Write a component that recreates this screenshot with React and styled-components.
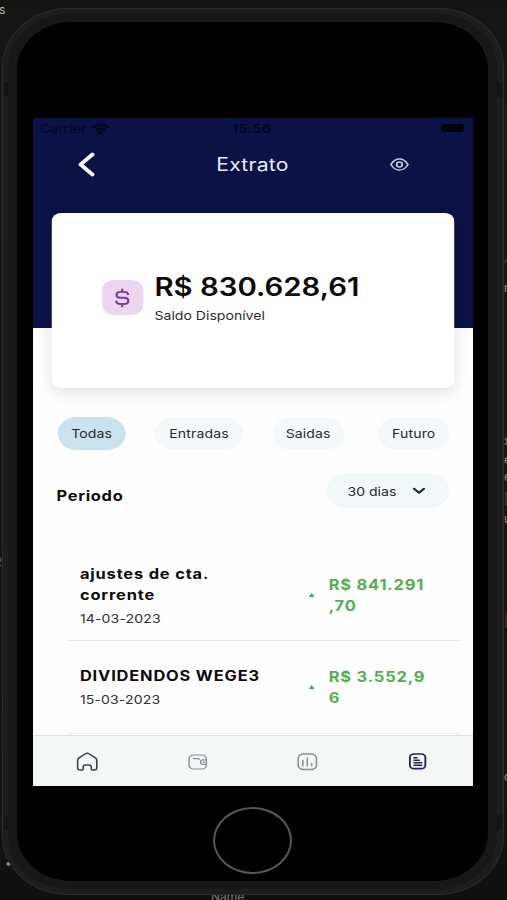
import { useState } from "react";
import styled, { createGlobalStyle } from "styled-components";

const GlobalStyle = createGlobalStyle`
  * {
    box-sizing: border-box;
  }

  body {
    margin: 0;
    background: #151515;
    font-family: Inter, "Liberation Sans", sans-serif;
  }
`;

const StyledDesktop = styled.div`
  position: relative;
  width: 507px;
  height: 900px;
  padding: 8px 3px 5px 2px;
  overflow: hidden;
  background: linear-gradient(#141414, #191919 12%, #151515 88%, #101010);
`;

const StyledFragment = styled.span`
  position: absolute;
  left: ${(props) => props.$x}px;
  top: ${(props) => props.$y}px;
  color: ${(props) => props.$color || "#8a8a8a"};
  font-size: 12px;
  line-height: 14px;
  white-space: nowrap;
`;

const StyledFrame = styled.div`
  position: relative;
  display: flex;
  width: 502px;
  height: 887px;
  padding: 5px 6px 5px 5px;
  border: 1px solid #2b2b2b;
  border-radius: 66px / 59px;
  background: #1d1d1d;
`;

const StyledKey = styled.i`
  position: absolute;
  top: ${(props) => props.$top}px;
  ${(props) => props.$side}: 1px;
  width: 8px;
  height: 15px;
  background: #151515;
`;

const StyledRim = styled.div`
  position: relative;
  display: flex;
  flex: 1;
  padding: 8px 9px 8px 9px;
  border-radius: 61px / 54px;
  background: #171717;
`;

const StyledGlass = styled.div`
  display: flex;
  flex: 1;
  flex-direction: column;
  align-items: center;
  padding-top: 96px;
  border-radius: 54px / 48px;
  background: #000000;
`;

const StyledScreenSlot = styled.div`
  width: 440px;
  height: 668px;
`;

/* the device is 375pt wide, stretched to the slot */
const StyledScreen = styled.main`
  display: flex;
  flex-direction: column;
  width: 375px;
  height: 668px;
  overflow: hidden;
  background: #fefefe;
  color: #0b0b0b;
  transform: scaleX(1.17333);
  transform-origin: 0 0;
`;

const StyledTop = styled.header`
  flex: none;
  height: 210px;
  background: #0b1245;
`;

const StyledStatus = styled.div`
  display: grid;
  grid-template-columns: 1fr auto 1fr;
  align-items: center;
  height: 20px;
  padding: 0 8px 0 6px;
  color: #03061f;
  font-size: 12px;
`;

const StyledCarrier = styled.div`
  display: flex;
  align-items: center;
  gap: 5px;
`;

const StyledClock = styled.span`
  font-weight: 600;
  letter-spacing: 0.3px;
`;

const StyledBattery = styled.i`
  justify-self: end;
  width: 19px;
  height: 8px;
  border-radius: 2px;
  background: #01020c;
`;

const StyledTitleBar = styled.div`
  display: grid;
  grid-template-columns: 1fr auto 1fr;
  align-items: center;
  height: 53px;
  padding: 0 54px 0 37px;
`;

const StyledTitle = styled.h1`
  margin: 0;
  padding-left: 16px;
  color: #e9ebf6;
  font-size: 18px;
  font-weight: 400;
  letter-spacing: 0.2px;
`;

const StyledIconButton = styled.button`
  display: flex;
  justify-self: ${(props) => props.$align || "center"};
  padding: 0;
  border: none;
  background: none;
  color: inherit;
`;

const StyledCard = styled.section`
  display: flex;
  flex: none;
  align-items: center;
  gap: 10px;
  width: 343px;
  height: 175px;
  margin: -115px 16px 0;
  padding: 0 0 6px 42.5px;
  border-radius: 8px;
  background: #ffffff;
  box-shadow: 0 5px 14px rgba(0, 0, 0, 0.11);
`;

const StyledBadge = styled.div`
  display: flex;
  align-items: center;
  justify-content: center;
  width: 35px;
  height: 35px;
  padding-right: 1px;
  border-radius: 10px;
  background: #ead6ef;
`;

const StyledBalance = styled.strong`
  display: block;
  font-size: 25px;
  font-weight: 600;
  line-height: 30px;
  white-space: nowrap;
`;

const StyledCaption = styled.span`
  display: block;
  margin-top: 6px;
  color: #2b2b2b;
  font-size: 12px;
  line-height: 16px;
`;

const StyledFilters = styled.nav`
  display: flex;
  flex: none;
  gap: 25px;
  margin: 29px 20px 0 21px;
`;

const StyledChip = styled.button`
  height: 33px;
  width: ${(props) => props.$width}px;
  padding: 0;
  border: none;
  border-radius: 17px;
  background: ${(props) => (props.$active ? "#cae2ee" : "#f3f8fb")};
  color: #262a2e;
  font-family: inherit;
  font-size: 12px;
  letter-spacing: 0.1px;

  &:last-child {
    margin-left: auto;
  }
`;

const StyledPeriod = styled.div`
  display: flex;
  flex: none;
  align-items: center;
  justify-content: space-between;
  height: 35px;
  margin: 23px 20px 0;
`;

const StyledPeriodLabel = styled.h2`
  margin: 0;
  padding-top: 9px;
  font-size: 14px;
  font-weight: 700;
  letter-spacing: 0.6px;
`;

const StyledSelect = styled.button`
  display: flex;
  align-items: center;
  gap: 13px;
  width: 105px;
  height: 35px;
  padding: 1px 0 0 18px;
  border: none;
  border-radius: 18px;
  background: #f2f7fa;
  color: #262a2e;
  font-family: inherit;
  font-size: 12px;
`;

const StyledList = styled.ul`
  flex: 1;
  min-height: 0;
  margin: 36px 10px 0 30px;
  padding: 0;
  overflow: hidden;
  list-style: none;
`;

const StyledItem = styled.li`
  display: grid;
  grid-template-columns: 184px 28px 85px;
  align-items: center;
  height: ${(props) => props.$height}px;
  padding: ${(props) => props.$top}px 0 0 10px;
  border-bottom: 1px solid #e9e9e9;
`;

const StyledName = styled.strong`
  display: block;
  max-width: ${(props) => props.$max || "none"};
  font-size: 14px;
  font-weight: 700;
  letter-spacing: 0.7px;
  line-height: 21px;
`;

const StyledDate = styled.span`
  display: block;
  margin-top: 5px;
  color: #303030;
  font-size: 12px;
  letter-spacing: 0.1px;
  line-height: 18px;
`;

const StyledArrow = styled.i`
  width: 5px;
  height: 4px;
  margin-left: 11px;
  background: #3ba27f;
  clip-path: polygon(50% 0, 100% 100%, 0 100%);
`;

const StyledAmount = styled.strong`
  color: #54ad52;
  font-size: 14px;
  font-weight: 700;
  letter-spacing: 0.7px;
  line-height: 21px;
  line-break: anywhere;
`;

const StyledTabs = styled.footer`
  display: grid;
  flex: none;
  grid-template-columns: repeat(4, 1fr);
  align-items: center;
  height: 51px;
  padding-top: 1px;
  border-top: 1px solid #dddede;
  background: #f5f6f6;
`;

const StyledTab = styled(StyledIconButton)`
  color: ${(props) => props.$color};
`;

const StyledHomeButton = styled.div`
  width: 79px;
  height: 67px;
  margin-top: 21px;
  border: 2px solid #585858;
  border-radius: 50%;
`;

const fragments = [
  { x: -1, y: 3, text: "s", color: "#b5b5b5" },
  { x: -5, y: 555, text: "2", color: "#555555" },
  { x: 5, y: 856, text: "•" },
  { x: 504, y: 256, text: "^", color: "#555555" },
  { x: 504, y: 281, text: "n" },
  { x: 504, y: 434, text: "x" },
  { x: 504, y: 453, text: "e" },
  { x: 504, y: 470, text: "e" },
  { x: 504, y: 492, text: "|", color: "#555555" },
  { x: 504, y: 512, text: "u" },
  { x: 504, y: 614, text: "|", color: "#444444" },
  { x: 504, y: 770, text: "o" },
  { x: 211, y: 890, text: "Name", color: "#777777" },
];

const filters = [
  { label: "Todas", width: 58 },
  { label: "Entradas", width: 75 },
  { label: "Saidas", width: 61 },
  { label: "Futuro", width: 61 },
];

const entries = [
  {
    name: "ajustes de cta. corrente",
    date: "14-03-2023",
    amount: "R$ 841.291,70",
    height: 97,
    top: 6,
    max: "130px",
  },
  {
    name: "DIVIDENDOS WEGE3",
    date: "15-03-2023",
    amount: "R$ 3.552,96",
    height: 93,
    top: 0,
  },
];

const Icon = ({ width, height, children, stroke = 1.5 }) => (
  <svg
    width={width}
    height={height}
    viewBox={`0 0 ${width} ${height}`}
    fill="none"
    stroke="currentColor"
    strokeWidth={stroke}
    strokeLinecap="round"
    strokeLinejoin="round"
  >
    {children}
  </svg>
);

const tabs = [
  {
    id: "home",
    color: "#344454",
    icon: (
      <Icon width={19} height={19} stroke={1.4}>
        <path d="M1 8.4Q1 6.8 2.3 5.9L7.7 1.8Q9.2.7 10.7 1.8l5.4 4.1Q17.4 6.8 17.4 8.4v7.4q0 2.2-2.2 2.2h-1q-1.6 0-1.6-1.6v-1.6q0-1.8-1.8-1.8H7.6q-1.8 0-1.8 1.8v1.6Q5.8 18 4.2 18h-1Q1 18 1 15.8z" />
      </Icon>
    ),
  },
  {
    id: "wallet",
    color: "#84918f",
    icon: (
      <Icon width={17} height={16} stroke={1.2}>
        <rect x="1" y="1" width="14.8" height="14" rx="4" />
        <path d="M4.8 4.7h4l1 .6M15.8 5.8h-3a2 2.3 0 0 0 0 4.6h3M13 8.1h1.4" />
      </Icon>
    ),
  },
  {
    id: "chart",
    color: "#84918f",
    icon: (
      <Icon width={18} height={18} stroke={1.3}>
        <rect x="1" y="1" width="15.6" height="15.5" rx="4.5" />
        <path d="M5 7.5v5.3M8.8 5v7.8M12.5 10.5v2.3" />
      </Icon>
    ),
  },
  {
    id: "statement",
    color: "#20235a",
    icon: (
      <Icon width={16} height={17} stroke={1.6}>
        <rect x="1.2" y="1" width="13.2" height="14.6" rx="3.4" />
        <path d="M4.8 4.8h2.4M4.8 7.3h4.4M4.8 9.7h6.4M4.8 12.2h6.4" />
      </Icon>
    ),
  },
];

function StatusBar() {
  return (
    <StyledStatus>
      <StyledCarrier>
        Carrier
        <Icon width={15} height={11} stroke={2.6}>
          <path d="M1.6 4Q7.5-1 13.4 4M4.4 6.8Q7.5 4.2 10.6 6.8" />
          <path d="M6.8 9.1l.7.6.7-.6z" />
        </Icon>
      </StyledCarrier>
      <StyledClock>15:56</StyledClock>
      <StyledBattery />
    </StyledStatus>
  );
}

function Entry({ entry }) {
  return (
    <StyledItem $height={entry.height} $top={entry.top}>
      <div>
        <StyledName $max={entry.max}>{entry.name}</StyledName>
        <StyledDate>{entry.date}</StyledDate>
      </div>
      <StyledArrow />
      <StyledAmount>{entry.amount}</StyledAmount>
    </StyledItem>
  );
}

function Extrato() {
  const [filter, setFilter] = useState("Todas");

  return (
    <StyledScreen>
      <StyledTop>
        <StatusBar />
        <StyledTitleBar>
          <StyledIconButton $align="start">
            <Icon width={16} height={25} stroke={3.6}>
              <path stroke="#ffffff" d="M13.6 2.5L3.6 12.5l10 10" />
            </Icon>
          </StyledIconButton>
          <StyledTitle>Extrato</StyledTitle>
          <StyledIconButton $align="end">
            <Icon width={17} height={14} stroke={1.5}>
              <g stroke="#c3c8dc">
                <path d="M1 6.5Q4 .9 8.3.9t7.3 5.6q-3 5.6-7.3 5.6T1 6.5z" />
                <circle cx="8.3" cy="6.5" r="2.4" />
              </g>
            </Icon>
          </StyledIconButton>
        </StyledTitleBar>
      </StyledTop>
      <StyledCard>
        <StyledBadge>
          <Icon width={14} height={20} stroke={1.9}>
            <path
              stroke="#7c3f97"
              d="M7 1.5v2.2M7 16.2v2.2M12 6.3Q11.5 3.9 8.8 3.9H5.3Q2.2 3.9 2.2 6.8T5.3 9.8h3.4q3.5 0 3.5 3.1t-3.5 3.1H5.3Q2.3 16 2 13.5"
            />
          </Icon>
        </StyledBadge>
        <div>
          <StyledBalance>R$ 830.628,61</StyledBalance>
          <StyledCaption>Saldo Disponível</StyledCaption>
        </div>
      </StyledCard>
      <StyledFilters>
        {filters.map((item) => (
          <StyledChip
            key={item.label}
            $width={item.width}
            $active={item.label === filter}
            onClick={() => setFilter(item.label)}
          >
            {item.label}
          </StyledChip>
        ))}
      </StyledFilters>
      <StyledPeriod>
        <StyledPeriodLabel>Periodo</StyledPeriodLabel>
        <StyledSelect>
          30 dias
          <Icon width={12} height={8} stroke={2}>
            <path d="M1.8 1.8L6 5.8l4.2-4" />
          </Icon>
        </StyledSelect>
      </StyledPeriod>
      <StyledList>
        {entries.map((entry) => (
          <Entry key={entry.name} entry={entry} />
        ))}
      </StyledList>
      <StyledTabs>
        {tabs.map((tab) => (
          <StyledTab key={tab.id} $color={tab.color}>
            {tab.icon}
          </StyledTab>
        ))}
      </StyledTabs>
    </StyledScreen>
  );
}

function App() {
  return (
    <>
      <GlobalStyle />
      <StyledDesktop>
        {fragments.map((item) => (
          <StyledFragment
            key={`${item.x}-${item.y}`}
            $x={item.x}
            $y={item.y}
            $color={item.color}
          >
            {item.text}
          </StyledFragment>
        ))}
        <StyledFrame>
          <StyledKey $side="left" $top={73} />
          <StyledKey $side="right" $top={73} />
          <StyledKey $side="left" $top={806} />
          <StyledKey $side="right" $top={806} />
          <StyledRim>
            <StyledGlass>
              <StyledScreenSlot>
                <Extrato />
              </StyledScreenSlot>
              <StyledHomeButton />
            </StyledGlass>
          </StyledRim>
        </StyledFrame>
      </StyledDesktop>
    </>
  );
}

export default App;
